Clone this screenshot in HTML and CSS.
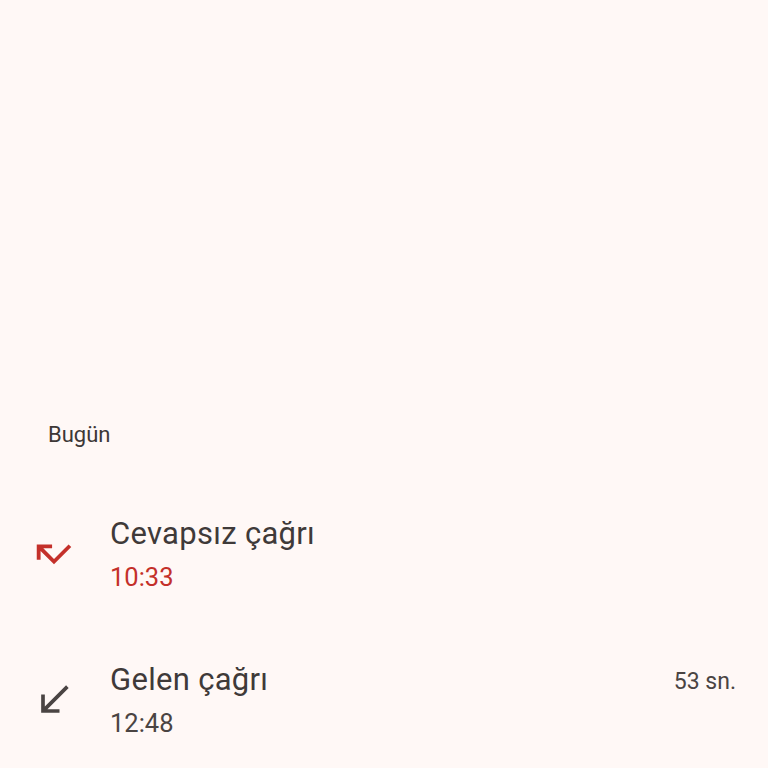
FILE: index.html
```html
<!DOCTYPE html>
<html lang="tr">

<head>
    <meta charset="UTF-8">
    <meta name="viewport" content="width=device-width, initial-scale=1.0">
    <title>Arama geçmişi</title>
    <link rel="stylesheet" href="styles.css">
</head>

<body>
    <main class="history">
        <div class="day">Bugün</div>

        <div class="call">
            <svg class="call-icon missed" viewBox="0 0 24 24">
                <path d="M19.59 7L12 14.59 6.41 9H11V7H3v8h2v-4.59l7 7 9-9z" />
            </svg>
            <div class="call-info">
                <div class="call-title">Cevapsız çağrı</div>
                <div class="call-time missed">10:33</div>
            </div>
        </div>

        <div class="call">
            <svg class="call-icon" viewBox="0 0 24 24">
                <path d="M20 5.41L18.59 4 7 15.59V9H5v10h10v-2H8.41z" />
            </svg>
            <div class="call-info">
                <div class="call-title">Gelen çağrı</div>
                <div class="call-time">12:48</div>
            </div>
            <div class="call-duration">53 sn.</div>
        </div>
    </main>
</body>

</html>
```

FILE: styles.css
```css
/* General Styles */
html,
body {
    margin: 0;
    padding: 0;
    height: 768px;
    overflow: hidden;
}

body {
    font-family: Roboto, 'Noto Sans', Arial, sans-serif;
    background-color: #fff8f6;
    color: #3f3a39;
}

.history {
    padding-top: 410px;
}

.day {
    height: 71px;
    line-height: 50px;
    padding-left: 48px;
    font-size: 22px;
    color: #3d3736;
}

.call {
    display: flex;
    align-items: center;
    height: 146px;
    padding: 0 32px;
}

.call-icon {
    width: 44px;
    height: 44px;
    flex-shrink: 0;
    fill: #4a4443;
}

.call-icon.missed {
    width: 46px;
    height: 46px;
    margin-left: -1px;
    margin-right: -1px;
    fill: #c4302a;
}

.call-info {
    flex: 1;
    margin-left: 34px;
}

.call-title {
    font-size: 31px;
    line-height: 40px;
    letter-spacing: 0.3px;
    color: #3f3a39;
}

.call-time {
    margin-top: 6px;
    font-size: 25.5px;
    line-height: 34px;
    color: #4a4443;
}

.call-time.missed {
    color: #c4302a;
}

.call-duration {
    font-size: 23px;
    color: #4a4443;
    align-self: flex-start;
    margin-top: 41px;
}
```
